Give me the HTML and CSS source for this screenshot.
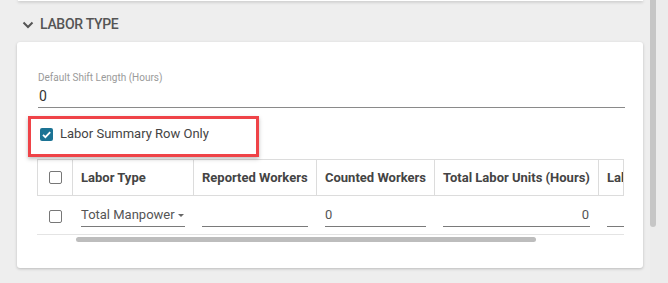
FILE: index.html
```html
<!DOCTYPE html>
<html>
<head>
<meta charset="utf-8">
<link rel="stylesheet" href="styles.css">
</head>
<body>
<div class="page">
  <div class="prev-card"></div>
  <div class="section-header">
    <svg class="chevron" width="12" height="8" viewBox="0 0 12 8"><polyline points="1.5,1.5 6,6 10.5,1.5" fill="none" stroke="#555" stroke-width="2"/></svg>
    <span class="section-title">LABOR TYPE</span>
  </div>
  <div class="card">
    <div class="field">
      <div class="field-label">Default Shift Length (Hours)</div>
      <div class="field-input">0</div>
    </div>
    <div class="check-row">
      <span class="cb cb-checked">
        <svg width="13" height="13" viewBox="0 0 13 13"><polyline points="3,6.8 5.4,9.2 10.2,4.2" fill="none" stroke="#fff" stroke-width="1.8"/></svg>
      </span>
      <span class="check-label">Labor Summary Row Only</span>
      <div class="highlight"></div>
    </div>
    <div class="grid">
      <div class="thead">
        <div class="cell c1"><span class="cb cb-empty"></span></div>
        <div class="cell c2">Labor Type</div>
        <div class="cell c3">Reported Workers</div>
        <div class="cell c4">Counted Workers</div>
        <div class="cell c5">Total Labor Units (Hours)</div>
        <div class="cell c6">Lab</div>
      </div>
      <div class="trow">
        <div class="cell c1"><span class="cb cb-empty"></span></div>
        <div class="cell c2"><div class="line-input select"><span>Total Manpower</span><span class="caret"></span></div></div>
        <div class="cell c3"><div class="line-input"></div></div>
        <div class="cell c4"><div class="line-input">0</div></div>
        <div class="cell c5"><div class="line-input right">0</div></div>
        <div class="cell c6"><div class="line-input"></div></div>
      </div>
      <div class="hscroll"></div>
    </div>
  </div>
</div>
<div class="vscroll"><div class="vthumb"></div></div>
</body>
</html>
```

FILE: styles.css
```css
* { box-sizing: border-box; }
html, body { margin: 0; padding: 0; }
body {
  background: #eeeeee;
  font-family: Roboto, "Noto Sans", "Liberation Sans", sans-serif;
  display: flex;
  width: 668px;
  height: 283px;
  overflow: hidden;
}
.page {
  width: 650px;
  flex: none;
}
.prev-card {
  margin-left: 18px;
  width: 625px;
  height: 1px;
  background: #fff;
  box-shadow: 0 1px 3px rgba(0,0,0,0.35);
}
.section-header {
  display: flex;
  align-items: center;
  height: 20px;
  margin-top: 13px;
  margin-bottom: 8px;
  padding-left: 22px;
}
.chevron { margin-right: 6px; margin-top: 1px; }
.section-title {
  font-size: 14px;
  line-height: 20px;
  font-weight: 500;
  color: #555;
  letter-spacing: -0.3px;
}
.card {
  margin-left: 17px;
  width: 626px;
  height: 226px;
  background: #fff;
  border-radius: 3px;
  box-shadow: 0 1px 3px rgba(0,0,0,0.22);
  padding: 30px 18px 0 21px;
}
.field-label {
  font-size: 10px;
  line-height: 12px;
  color: #9a9a9a;
  margin-bottom: 2px;
}
.field-input {
  font-size: 14px;
  line-height: 20px;
  color: #333;
  padding-bottom: 1px;
  border-bottom: 1px solid #8a8a8a;
  padding-left: 1px;
}
.check-row {
  position: relative;
  display: flex;
  align-items: center;
  height: 16px;
  margin-top: 18px;
  padding-left: 2px;
}
.cb {
  display: inline-block;
  width: 13px;
  height: 13px;
  border-radius: 2px;
  flex: none;
}
.cb-checked { background: #1b7394; }
.cb-checked svg { display: block; }
.cb-empty { border: 1.5px solid #777; width: 13px; height: 13px; }
.check-label {
  margin-left: 7px;
  font-size: 13px;
  line-height: 16px;
  color: #444;
}
.highlight {
  position: absolute;
  left: -10px;
  top: -10px;
  width: 231px;
  height: 41px;
  border: 3px solid #ef4348;
  box-shadow: 0 2px 4px rgba(0,0,0,0.25);
  pointer-events: none;
}
.grid {
  margin-top: 17px;
  width: 587px;
  margin-left: -1px;
}
.thead {
  display: flex;
  height: 37px;
  border: 1px solid #dcdcdc;
  overflow: hidden;
  width: 587px;
}
.thead .cell {
  border-right: 1px solid #dcdcdc;
  font-size: 13px;
  font-weight: 700;
  color: #444;
  display: flex;
  align-items: center;
  padding: 0 8px;
  white-space: nowrap;
}
.cell { flex: none; }
.c1 { width: 35px; justify-content: center; }
.c2 { width: 121px; }
.c3 { width: 123px; }
.c4 { width: 118px; }
.c5 { width: 164px; }
.c6 { width: 100px; }
.thead .c1 { padding: 0 0 0 1px; }
.thead .c6 { width: 24px; padding-right: 0; overflow: hidden; border-right: none; }
.trow {
  display: flex;
  width: 587px;
  height: 39px;
  padding-left: 1px;
  padding-top: 2px;
  border-bottom: 1px solid #e4e4e4;
  overflow: hidden;
  align-items: center;
}
.trow .cell {
  border-right: 1px solid transparent;
  padding: 0 8px;
  display: flex;
  align-items: center;
}
.trow .c1 { padding: 0 0 0 1px; }
.line-input {
  width: 100%;
  height: 22px;
  font-size: 13px;
  line-height: 20px;
  color: #555;
  padding-bottom: 1px;
  border-bottom: 1px solid #7a7a7a;
  white-space: nowrap;
}
.line-input.right { text-align: right; padding-right: 1px; }
.select { display: flex; align-items: center; justify-content: space-between; }
.caret {
  width: 0; height: 0;
  border-left: 3px solid transparent;
  border-right: 3px solid transparent;
  border-top: 3px solid #666;
  margin-right: 1px;
}
.hscroll {
  margin-top: 2px;
  margin-left: 39px;
  width: 460px;
  height: 5px;
  border-radius: 3px;
  background: #bdbdbd;
}
.vscroll {
  width: 18px;
  flex: none;
  background: #ececec;
}
.vthumb {
  width: 6px;
  height: 227px;
  background: #c6c6c6;
  border-radius: 0 0 3px 3px;
}
```
